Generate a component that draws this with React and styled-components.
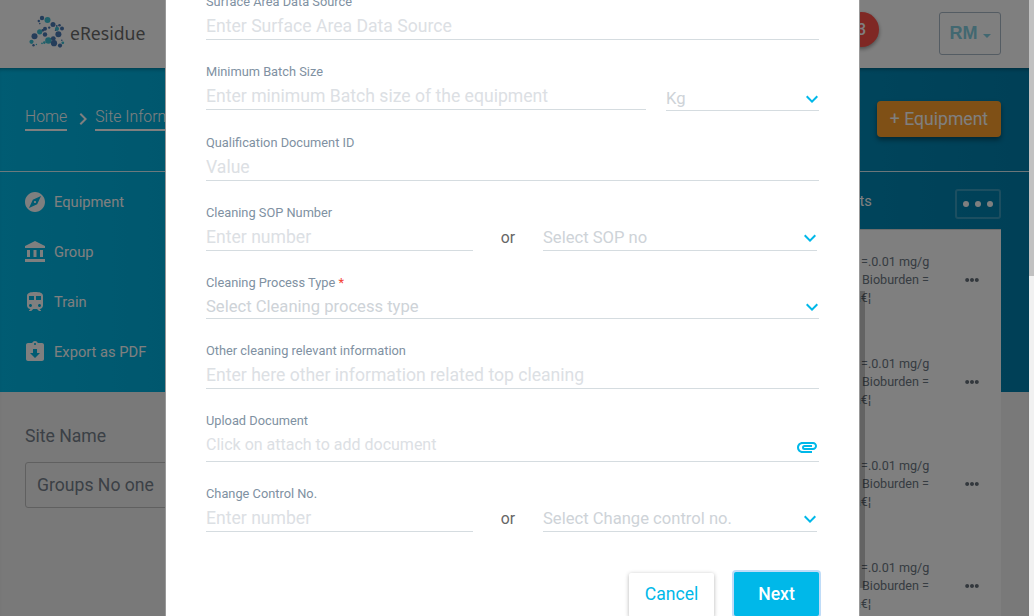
import React from "react";
import styled, { createGlobalStyle, css } from "styled-components";
import {
  MdExplore,
  MdAccountBalance,
  MdTrain,
  MdAssignmentReturned,
  MdExpandMore,
  MdChevronRight,
  MdAttachment,
} from "react-icons/md";
import { FaEllipsisH } from "react-icons/fa";

const GlobalStyle = createGlobalStyle`
  *, *::before, *::after { box-sizing: border-box; }
  html, body { margin: 0; height: 616px; overflow: hidden; }
  body { font-family: Roboto, "Liberation Sans", sans-serif; font-size: 16px; }
  button, input { font-family: inherit; margin: 0; }
`;

const Viewport = styled.div`
  display: flex;
  width: 1034px;
  height: 616px;
  overflow: hidden;
`;

const Page = styled.div`
  position: relative;
  flex: 1;
  height: 616px;
  overflow: hidden;
  background: #f2f2f2;
`;

const ScrollTrack = styled.div`
  width: 5px;
  background: #f1f1f1;
`;

const ScrollThumb = styled.div`
  height: 276px;
  background: #c1c1c1;
`;

const Header = styled.header`
  display: flex;
  align-items: flex-start;
  height: 68px;
  padding: 12px 28px 0 30px;
  background: #fff;
`;

const Brand = styled.div`
  display: flex;
  align-items: center;
  height: 40px;
  margin-right: auto;
  gap: 5px;
`;

const BrandName = styled.span`
  padding-top: 2px;
  font-family: "Noto Sans", sans-serif;
  font-size: 17.6px;
  line-height: 24px;
  color: #6b6b6b;
`;

const Alerts = styled.div`
  display: flex;
  align-items: center;
  justify-content: flex-end;
  width: 35px;
  height: 35px;
  margin-right: 60px;
  padding-right: 13px;
  border-radius: 50%;
  background: #ff5049;
  color: #fff;
  font-size: 16px;
  font-weight: 500;
  box-shadow: 0 2px 4px rgba(0, 0, 0, 0.4);
`;

const UserButton = styled.button`
  display: flex;
  align-items: center;
  justify-content: center;
  gap: 5px;
  width: 62px;
  height: 43px;
  padding: 0;
  border: 1px solid #a9b8c6;
  border-radius: 3px;
  background: transparent;
  color: #84d0e2;
  font: bold 18px "Liberation Sans", sans-serif;
`;

const Caret = styled.i`
  margin-top: 4px;
  border: 4px solid transparent;
  border-top-color: currentColor;
  border-bottom: 0;
`;

const Main = styled.main`
  background: linear-gradient(90deg, #00b8e6, #0080ae) 0 0 / 100% 324px no-repeat;
  box-shadow: inset 0 4px 4px -3px rgba(0, 0, 0, 0.35);
`;

const TopBar = styled.div`
  display: flex;
  align-items: flex-start;
  justify-content: space-between;
  height: 104px;
  padding: 33px 28px 0 25px;
  border-bottom: 1px solid rgba(255, 255, 255, 0.85);
`;

const Breadcrumb = styled.nav`
  display: flex;
  align-items: center;
  padding-top: 5px;
`;

const Crumb = styled.a`
  height: 25px;
  border-bottom: 2px solid #fff;
  color: #fff;
  font-size: 15.8px;
  font-weight: 300;
  line-height: 22px;
`;

const CrumbArrow = styled(MdChevronRight)`
  margin: 0 0 0 4px;
  color: #fff;
  font-size: 24px;
`;

const AddButton = styled.button`
  width: 124px;
  height: 36px;
  padding: 0;
  border: 0;
  border-radius: 4px;
  background: #ffa02c;
  color: #fff;
  font-size: 17.6px;
  box-shadow: 0 3px 5px rgba(0, 0, 0, 0.4);
`;

const Columns = styled.div`
  display: flex;
  justify-content: space-between;
`;

const Sidebar = styled.aside`
  width: 260px;
`;

const SideNav = styled.ul`
  height: 220px;
  margin: 0;
  padding: 5px 0 0 23px;
  list-style: none;
`;

const SideItem = styled.li`
  display: flex;
  align-items: center;
  gap: 7px;
  height: 50px;
  color: #fff;
  font-size: 14.7px;

  svg {
    font-size: 24px;
  }
`;

const SiteFilter = styled.div`
  padding: 32px 0 0 25px;
`;

const SiteLabel = styled.div`
  color: #77818c;
  font-size: 17.6px;
  line-height: 24px;
`;

const SiteInput = styled.div`
  display: flex;
  align-items: center;
  width: 210px;
  height: 46px;
  margin-top: 14px;
  padding: 0 0 0 11px;
  border: 1px solid #c0c0c0;
  border-radius: 3px;
  color: #77818c;
  font-size: 17.6px;
`;

const Content = styled.section`
  width: 200px;
  margin-right: 28px;
`;

const Tabs = styled.div`
  display: flex;
  justify-content: space-between;
  height: 57px;
  padding: 17px 0 0 20px;
`;

const Tab = styled.span`
  color: #fff;
  font-size: 14.6px;
  line-height: 24px;
`;

const MoreButton = styled.button`
  display: flex;
  align-items: center;
  justify-content: center;
  gap: 6px;
  width: 46px;
  height: 30px;
  padding: 0;
  border: 2px solid rgba(255, 255, 255, 0.22);
  border-radius: 3px;
  background: transparent;
`;

const Dot = styled.i`
  width: 6px;
  height: 6px;
  border-radius: 50%;
  background: #fff;
`;

const Table = styled.div`
  position: relative;
  height: 390px;
  padding-top: 23px;
  background: #fff;
  border-top: 1px solid #d8d8d8;
`;

const TableRow = styled.div`
  display: flex;
  justify-content: space-between;
  height: 102px;
  padding: 0 22px 0 51px;
  color: #6d7883;
`;

const Limits = styled.div`
  width: 80px;
  font-size: 12.6px;
  line-height: 18px;
  white-space: pre;
`;

const LimitLine = styled.div`
  padding-left: ${(p) => p.$start}px;
`;

const RowMenu = styled(FaEllipsisH)`
  margin-top: 20px;
  font-size: 14px;
  color: #66707a;
`;

const TableScroll = styled.div`
  position: absolute;
  left: 56px;
  top: 61px;
  width: 8px;
  height: 297px;
  background: rgba(0, 0, 0, 0.22);
`;

const Backdrop = styled.div`
  position: absolute;
  inset: 0;
  display: flex;
  padding-left: 165px;
  background: rgba(0, 0, 0, 0.5);
`;

const Modal = styled.form`
  width: 695px;
  height: 700px;
  margin-top: -50px;
  padding: 44px 40px 0;
  border: 1px solid #999;
  border-top: 0;
  background: #fff;
`;

const FieldRow = styled.div`
  display: flex;
  align-items: flex-start;
  width: 613px;
  margin-bottom: 24px;
`;

const Field = styled.div`
  flex: ${(p) => (p.$width ? `0 0 ${p.$width}px` : "1")};
  margin-top: ${(p) => p.$drop || 0}px;
  margin-left: ${(p) => p.$gap || 0}px;
`;

const Label = styled.label`
  display: block;
  height: 16px;
  color: #8091a2;
  font-size: 12.8px;
  line-height: 16px;
`;

const Required = styled.span`
  color: #f44336;
`;

const control = css`
  display: flex;
  width: 100%;
  padding: 0;
  border: 0;
  border-bottom: 1px solid #d5dce0;
  border-radius: 0;
  background: transparent;
`;

const TextInput = styled.input`
  ${control}
  height: 30px;
  padding-top: 2px;
  font-size: 17.6px;
  outline: 0;

  &::placeholder {
    color: #dce0e4;
    opacity: 1;
  }
`;

const Select = styled.div`
  ${control}
  justify-content: space-between;
  height: 28px;
  padding-top: ${(p) => (p.$raised ? 4 : 5)}px;
  color: #ced3d8;
  font-size: 16.6px;
  line-height: 22px;

  svg {
    flex: none;
    margin: -1px -5px 0 0;
    color: #00b8e9;
    font-size: 24px;
  }
`;

const Upload = styled.div`
  ${control}
  justify-content: space-between;
  height: 33px;
  padding-top: 5px;
  color: #dce0e4;
  font-size: 16px;
  line-height: 22px;

  svg {
    margin-top: 1px;
    color: #00b8e9;
    font-size: 24px;
  }
`;

const Or = styled.span`
  width: 70px;
  padding-top: 22px;
  color: #666;
  font-size: 15.8px;
  line-height: 22px;
  text-align: center;
`;

const Actions = styled.div`
  display: flex;
  justify-content: flex-end;
  align-items: flex-start;
  gap: 20px;
  width: 613px;
  padding-top: 16px;
`;

const ActionButton = styled.button`
  width: 85px;
  height: 44px;
  margin-top: ${(p) => (p.$primary ? 0 : 1)}px;
  padding: 0 0 ${(p) => (p.$primary ? 0 : 2)}px;
  border: 0;
  border-radius: 2px;
  background: ${(p) => (p.$primary ? "#00b8e9" : "#fff")};
  color: ${(p) => (p.$primary ? "#fff" : "#00b8e9")};
  font-size: 17.6px;
  font-weight: ${(p) => (p.$primary ? 500 : 400)};
  box-shadow: ${(p) =>
    p.$primary ? "0 0 0 2px #bfdcf8" : "0 1px 4px rgba(0, 0, 0, 0.3)"};
`;

const NAVY = "#4b7ab5";
const TEAL = "#3fc0d4";
const molecules = [
  [12, 3, 2.2, NAVY], [17.5, 5, 3, TEAL], [8.8, 6, 1.2, NAVY], [9.8, 8.6, 0.8, NAVY],
  [23, 9.5, 2.5, NAVY], [26.8, 11, 0.9, NAVY], [29.5, 10.3, 1.3, NAVY], [32, 13.6, 2, NAVY],
  [27, 13.8, 2.1, TEAL], [19.2, 12.6, 1.2, NAVY], [15, 13.7, 2, NAVY], [12.8, 15.3, 1.4, NAVY],
  [9.7, 16.8, 2.6, TEAL], [4.5, 21.2, 3, NAVY], [15, 19.5, 2.2, NAVY], [28.4, 19.2, 3, NAVY],
  [1.5, 26.8, 2.1, TEAL], [3.5, 30.2, 1.2, NAVY], [6.4, 29.5, 0.7, TEAL], [12, 28.3, 0.9, TEAL],
  [14.3, 27.6, 1.3, TEAL], [18.4, 25.5, 3.2, TEAL], [23.3, 23.6, 2.4, NAVY], [24, 28.2, 3.1, NAVY],
  [30, 30.6, 2.1, NAVY], [32.8, 27.8, 1.4, TEAL], [31.8, 25.3, 0.8, NAVY], [25.5, 15.2, 0.8, NAVY],
];

function Logo() {
  return (
    <svg width="35" height="34" viewBox="0 0 35 34" overflow="visible">
      {molecules.map(([x, y, r, fill]) => (
        <circle key={`${x}-${y}`} cx={x} cy={y} r={r} fill={fill} />
      ))}
    </svg>
  );
}

const sideItems = [
  [MdExplore, "Equipment"],
  [MdAccountBalance, "Group"],
  [MdTrain, "Train"],
  [MdAssignmentReturned, "Export as PDF"],
];

function NumberOrSelect({ label, option }) {
  return (
    <FieldRow>
      <Field $width={267}>
        <Label>{label}</Label>
        <TextInput placeholder="Enter number" />
      </Field>
      <Or>or</Or>
      <Field $width={274} $drop={18}>
        <Select $raised>
          {option}
          <MdExpandMore />
        </Select>
      </Field>
    </FieldRow>
  );
}

function TextField({ label, placeholder }) {
  return (
    <FieldRow>
      <Field>
        <Label>{label}</Label>
        <TextInput placeholder={placeholder} />
      </Field>
    </FieldRow>
  );
}

function EquipmentForm() {
  return (
    <Modal>
      <TextField label="Surface Area Data Source" placeholder="Enter Surface Area Data Source" />
      <FieldRow>
        <Field $width={440}>
          <Label>Minimum Batch Size</Label>
          <TextInput placeholder="Enter minimum Batch size of the equipment" />
        </Field>
        <Field $gap={20} $drop={19}>
          <Select>
            Kg
            <MdExpandMore />
          </Select>
        </Field>
      </FieldRow>
      <TextField label="Qualification Document ID" placeholder="Value" />
      <NumberOrSelect label="Cleaning SOP Number" option="Select SOP no" />
      <FieldRow>
        <Field>
          <Label>
            Cleaning Process Type <Required>*</Required>
          </Label>
          <Select>
            Select Cleaning process type
            <MdExpandMore />
          </Select>
        </Field>
      </FieldRow>
      <TextField
        label="Other cleaning relevant information"
        placeholder="Enter here other information related top cleaning"
      />
      <FieldRow>
        <Field>
          <Label>Upload Document</Label>
          <Upload>
            Click on attach to add document
            <MdAttachment />
          </Upload>
        </Field>
      </FieldRow>
      <NumberOrSelect label="Change Control No." option="Select Change control no." />
      <Actions>
        <ActionButton type="button">Cancel</ActionButton>
        <ActionButton type="button" $primary>Next</ActionButton>
      </Actions>
    </Modal>
  );
}

export default function App() {
  return (
    <Viewport>
      <GlobalStyle />
      <Page>
        <Header>
          <Brand>
            <Logo />
            <BrandName>eResidue</BrandName>
          </Brand>
          <Alerts>3</Alerts>
          <UserButton>
            RM <Caret />
          </UserButton>
        </Header>
        <Main>
          <TopBar>
            <Breadcrumb>
              <Crumb>Home</Crumb>
              <CrumbArrow />
              <Crumb>Site Information</Crumb>
            </Breadcrumb>
            <AddButton>+ Equipment</AddButton>
          </TopBar>
          <Columns>
            <Sidebar>
              <SideNav>
                {sideItems.map(([Icon, text]) => (
                  <SideItem key={text}>
                    <Icon />
                    {text}
                  </SideItem>
                ))}
              </SideNav>
              <SiteFilter>
                <SiteLabel>Site Name</SiteLabel>
                <SiteInput>Groups No one</SiteInput>
              </SiteFilter>
            </Sidebar>
            <Content>
              <Tabs>
                <Tab>Reports</Tab>
                <MoreButton>
                  <Dot />
                  <Dot />
                  <Dot />
                </MoreButton>
              </Tabs>
              <Table>
                {[0, 1, 2, 3].map((row) => (
                  <TableRow key={row}>
                    <Limits>
                      <LimitLine $start={9}>=.0.01 mg/g</LimitLine>
                      <LimitLine $start={10}>Bioburden =</LimitLine>
                      <LimitLine $start={2}>â€¦</LimitLine>
                    </Limits>
                    <RowMenu />
                  </TableRow>
                ))}
                <TableScroll />
              </Table>
            </Content>
          </Columns>
        </Main>
        <Backdrop>
          <EquipmentForm />
        </Backdrop>
      </Page>
      <ScrollTrack>
        <ScrollThumb />
      </ScrollTrack>
    </Viewport>
  );
}
